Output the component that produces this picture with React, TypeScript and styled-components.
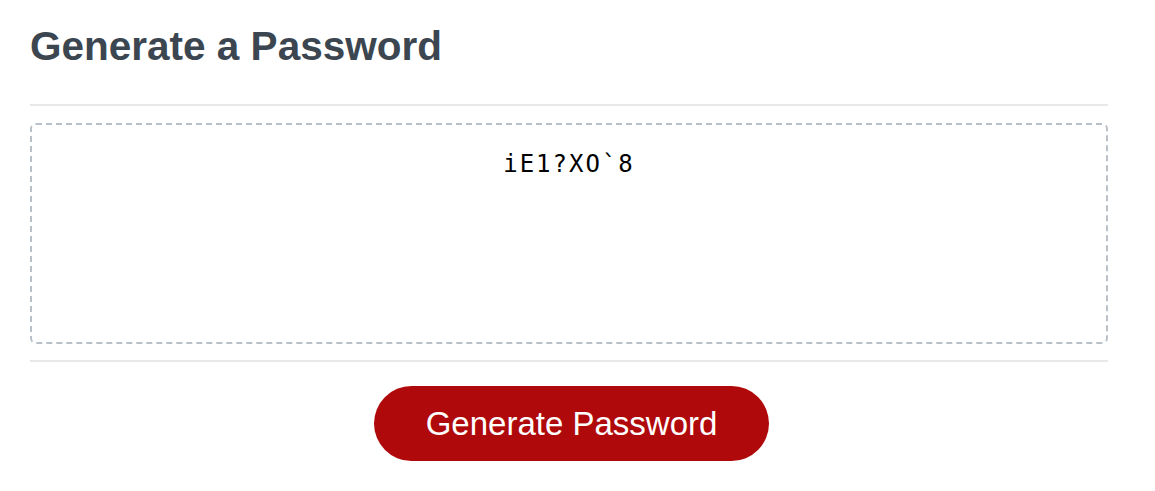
import React from "react";
import styled, { createGlobalStyle } from "styled-components";

const Global = createGlobalStyle`
  html, body { margin: 0; padding: 0; background: #ffffff; }
  body { font-family: "Liberation Sans", Arial, sans-serif; }
`;

const Page = styled.main`
  padding: 0 0 0 30px;
`;

const Card = styled.section`
  width: 1078px;
  display: flex;
  flex-direction: column;
`;

const Header = styled.header`
  padding-top: 23px;
  padding-bottom: 35px;
  border-bottom: 2px solid #e7e8e9;
`;

const Title = styled.h2`
  margin: 0;
  font-size: 40.5px;
  line-height: 46px;
  font-weight: 700;
  color: #3b4651;
`;

const Body = styled.div`
  padding: 17px 0 16px;
  display: flex;
`;

const Output = styled.textarea`
  box-sizing: border-box;
  width: 100%;
  height: 221px;
  resize: none;
  border: 2px dashed #b9c0c8;
  border-radius: 6px;
  padding: 26px 10px 10px;
  font-family: "DejaVu Sans Mono", monospace;
  font-size: 24px;
  line-height: 1.15;
  letter-spacing: 2px;
  text-align: center;
  color: #000;
  background: #fff;
  outline: none;
`;

const Footer = styled.footer`
  border-top: 2px solid #e7e8e9;
  padding-top: 24px;
  display: flex;
  justify-content: center;
`;

const Button = styled.button`
  border: none;
  background: #b0090b;
  color: #ffffff;
  font-family: "Liberation Sans", Arial, sans-serif;
  font-size: 33px;
  line-height: 37px;
  padding: 19px 52px;
  border-radius: 40px;
  margin-left: 5px;
  cursor: pointer;
`;

export default function App() {
  return (
    <>
      <Global />
      <Page>
        <Card>
          <Header>
            <Title>Generate a Password</Title>
          </Header>
          <Body>
            <Output readOnly value="iE1?XO`8" />
          </Body>
          <Footer>
            <Button>Generate Password</Button>
          </Footer>
        </Card>
      </Page>
    </>
  );
}
